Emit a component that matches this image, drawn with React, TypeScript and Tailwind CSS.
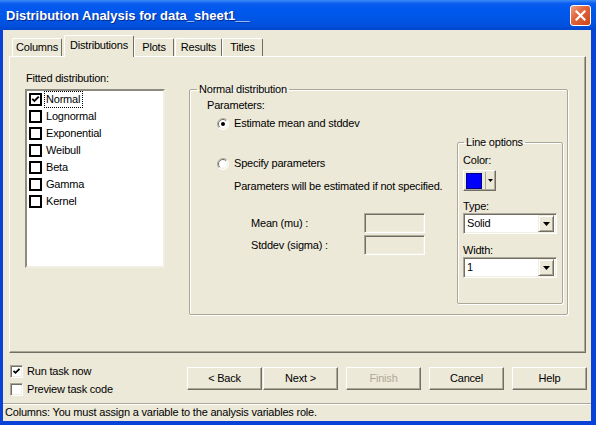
import React from "react";

const F = "font-['Tahoma','Liberation_Sans',Arial,sans-serif] text-[11px] leading-[13px] tracking-[-0.2px] text-black";

function ListCheck({ checked }: { checked?: boolean }) {
  return (
    <span className="w-[13px] h-[13px] border-2 border-black bg-white flex items-center justify-center shrink-0">
      {checked && (
        <svg width="9" height="9" viewBox="0 0 9 9">
          <path d="M1.2 3.8 L3.4 6 L7.8 1.6" stroke="black" strokeWidth="1.9" fill="none" />
        </svg>
      )}
    </span>
  );
}

function SunkenCheck({ checked }: { checked?: boolean }) {
  return (
    <span className="w-[13px] h-[13px] border border-t-[#aca899] border-l-[#aca899] border-b-white border-r-white bg-white shadow-[inset_1px_1px_0_#716f64,inset_-1px_-1px_0_#f1efe2] flex items-center justify-center shrink-0">
      {checked && (
        <svg width="9" height="9" viewBox="0 0 9 9">
          <path d="M1.5 3.8 L3.5 5.8 L7.5 1.8" stroke="black" strokeWidth="1.8" fill="none" />
        </svg>
      )}
    </span>
  );
}

function Radio({ checked }: { checked?: boolean }) {
  return (
    <svg width="12" height="12" viewBox="0 0 12 12" className="shrink-0">
      <circle cx="6" cy="6" r="5.5" fill="white" />
      <path d="M2.1 9.9 A5.5 5.5 0 0 1 9.9 2.1" stroke="#aca899" fill="none" />
      <path d="M9.9 2.1 A5.5 5.5 0 0 1 2.1 9.9" stroke="#ffffff" fill="none" />
      <path d="M2.8 9.2 A4.5 4.5 0 0 1 9.2 2.8" stroke="#716f64" fill="none" />
      <path d="M9.2 2.8 A4.5 4.5 0 0 1 2.8 9.2" stroke="#f1efe2" fill="none" />
      {checked && <circle cx="6" cy="6" r="2" fill="black" />}
    </svg>
  );
}

function Arrow() {
  return (
    <svg width="7" height="4" viewBox="0 0 7 4">
      <path d="M0 0 H7 L3.5 4 Z" fill="black" />
    </svg>
  );
}

function DropBtn() {
  return (
    <span className="w-[16px] h-[17px] bg-[#ece9d8] border border-t-[#f1efe2] border-l-[#f1efe2] border-b-[#716f64] border-r-[#716f64] shadow-[inset_1px_1px_0_white,inset_-1px_-1px_0_#aca899] flex items-center justify-center shrink-0">
      <Arrow />
    </span>
  );
}

function Select({ value }: { value: string }) {
  return (
    <div className="w-[94px] h-[21px] bg-white border border-t-[#aca899] border-l-[#aca899] border-b-white border-r-white shadow-[inset_1px_1px_0_#716f64,inset_-1px_-1px_0_#f1efe2] flex items-center pl-[3px] pr-[2px]">
      <span className="flex-1">{value}</span>
      <DropBtn />
    </div>
  );
}

function Button({ label, disabled, className = "" }: { label: string; disabled?: boolean; className?: string }) {
  return (
    <div
      className={`w-[75px] h-[23px] bg-[#ece9d8] border border-t-white border-l-white border-b-[#716f64] border-r-[#716f64] shadow-[inset_-1px_-1px_0_#aca899] flex items-center justify-center ${disabled ? "text-[#aca899]" : ""} ${className}`}
    >
      {label}
    </div>
  );
}

function Tab({ label, w, selected, className = "" }: { label: string; w: string; selected?: boolean; className?: string }) {
  return (
    <div
      className={`${w} ${selected ? "h-[22px] mb-[-1px] relative z-10 pb-[3px]" : "h-[18px]"} bg-[#ece9d8] border-t border-l border-r border-t-white border-l-white border-r-[#716f64] rounded-t-[2px] flex items-center justify-center shrink-0 ${className}`}
    >
      {label}
    </div>
  );
}

const items = ["Normal", "Lognormal", "Exponential", "Weibull", "Beta", "Gamma", "Kernel"];

const etched =
  "border border-[#aca899] shadow-[inset_1px_1px_0_white,1px_1px_0_white] rounded-[2px]";

export default function App() {
  return (
    <div className={`w-[596px] h-[425px] flex flex-col bg-[#0842d6] ${F}`}>
      {/* Title bar */}
      <div className="h-[30px] shrink-0 flex items-center pl-[6px] pr-[5px] bg-[linear-gradient(to_bottom,#3d8cf7_0%,#0a5cf0_12%,#0058ee_30%,#0055e5_65%,#004fda_88%,#0046cc_100%)]">
        <span className="flex-1 text-white font-bold text-[13px] leading-[15px] font-['Trebuchet_MS','Liberation_Sans',Arial,sans-serif] tracking-[0px] [text-shadow:1px_1px_0_#0a2a8a]">
          Distribution Analysis for data_sheet1__
        </span>
        <div className="w-[21px] h-[21px] rounded-[3px] border border-white bg-[linear-gradient(135deg,#f0a080_0%,#e2663c_40%,#cc4418_100%)] flex items-center justify-center">
          <svg width="11" height="11" viewBox="0 0 11 11">
            <path d="M1.5 1.5 L9.5 9.5 M9.5 1.5 L1.5 9.5" stroke="white" strokeWidth="2.2" strokeLinecap="square" />
          </svg>
        </div>
      </div>

      {/* Body */}
      <div className="flex-1 ml-[3px] mr-[5px] mb-[4px] bg-[#ece9d8] flex flex-col">
        {/* Tabs */}
        <div className="h-[26px] shrink-0 flex items-end pl-[9px]">
          <Tab label="Columns" w="w-[50px]" />
          <Tab label="Distributions" w="w-[70px]" selected className="ml-[2px]" />
          <Tab label="Plots" w="w-[40px]" />
          <Tab label="Results" w="w-[47px]" className="ml-[1px]" />
          <Tab label="Titles" w="w-[41px]" />
        </div>

        {/* Tab page */}
        <div className="ml-[6px] mr-[5px] h-[297px] shrink-0 border border-t-white border-l-white border-b-[#716f64] border-r-[#716f64] shadow-[inset_-1px_-1px_0_#aca899] flex items-start pt-[15px] pl-[15px]">
          {/* Left column */}
          <div className="w-[140px] shrink-0 flex flex-col">
            <div className="h-[13px] pl-[1px]">Fitted distribution:</div>
            <div className="mt-[4px] h-[179px] bg-white border-2 border-t-[#8d8b80] border-l-[#8d8b80] border-b-[#f1efe2] border-r-[#f1efe2] flex flex-col pl-[2px]">
              {items.map((it, i) => (
                <div key={it} className="h-[17px] flex items-center gap-[2px]">
                  <ListCheck checked={i === 0} />
                  <span
                    className={`h-[17px] flex items-center pl-[1px] pr-[2px] ${i === 0 ? "border border-dotted border-black" : "border border-transparent"}`}
                  >
                    {it}
                  </span>
                </div>
              ))}
            </div>
          </div>

          {/* Normal distribution group */}
          <fieldset className={`ml-[24px] mt-[11px] w-[379px] h-[232px] shrink-0 p-0 m-0 ${etched} flex`}>
            <legend className="ml-[7px] px-[2px] h-[13px]">Normal distribution</legend>
            <div className="flex w-full">
              <div className="flex flex-col pl-[17px] flex-1">
                <div className="mt-[3px] h-[13px]">Parameters:</div>
                <div className="mt-[5px] h-[13px] pl-[10px] flex items-center gap-[5px]">
                  <Radio checked />
                  <span>Estimate mean and stddev</span>
                </div>
                <div className="mt-[27px] h-[13px] pl-[10px] flex items-center gap-[5px]">
                  <Radio />
                  <span>Specify parameters</span>
                </div>
                <div className="mt-[10px] h-[13px] pl-[27px] whitespace-nowrap">
                  Parameters will be estimated if not specified.
                </div>
                <div className="mt-[20px] pl-[44px] flex items-center">
                  <span className="w-[113px] shrink-0">Mean (mu) :</span>
                  <div className="w-[61px] h-[20px] border border-t-[#aca899] border-l-[#aca899] border-b-white border-r-white shadow-[inset_1px_1px_0_#716f64,inset_-1px_-1px_0_#f1efe2] bg-[#ece9d8]" />
                </div>
                <div className="mt-[2px] pl-[44px] flex items-center">
                  <span className="w-[113px] shrink-0">Stddev (sigma) :</span>
                  <div className="w-[61px] h-[20px] border border-t-[#aca899] border-l-[#aca899] border-b-white border-r-white shadow-[inset_1px_1px_0_#716f64,inset_-1px_-1px_0_#f1efe2] bg-[#ece9d8]" />
                </div>
              </div>

              {/* Line options */}
              <fieldset className={`mt-[40px] mr-[4px] w-[106px] h-[168px] shrink-0 p-0 m-0 ${etched}`}>
                <legend className="ml-[6px] px-[2px] h-[13px]">Line options</legend>
                <div className="flex flex-col pl-[5px]">
                  <div className="mt-[5px] h-[13px]">Color:</div>
                  <div className="mt-[3px] w-[33px] h-[21px] border border-t-white border-l-white border-b-[#716f64] border-r-[#716f64] shadow-[inset_-1px_-1px_0_#aca899] flex items-center pl-[2px]">
                    <span className="w-[16px] h-[16px] bg-[#0000ff] border border-[#000080]" />
                    <span className="ml-[3px] w-[1px] h-[17px] bg-[#aca899]" />
                    <span className="ml-[2px] flex items-center">
                      <svg width="5" height="3" viewBox="0 0 5 3">
                        <path d="M0 0 H5 L2.5 3 Z" fill="black" />
                      </svg>
                    </span>
                  </div>
                  <div className="mt-[9px] h-[13px]">Type:</div>
                  <Select value="Solid" />
                  <div className="mt-[10px] h-[13px]">Width:</div>
                  <Select value="1" />
                </div>
              </fieldset>
            </div>
          </fieldset>
        </div>

        {/* Bottom area */}
        <div className="h-[50px] shrink-0 flex">
          <div className="w-[184px] shrink-0 pl-[7px] pt-[12px] flex flex-col gap-[5px]">
            <div className="h-[13px] flex items-center gap-[4px]">
              <SunkenCheck checked />
              <span>Run task now</span>
            </div>
            <div className="h-[13px] flex items-center gap-[4px]">
              <SunkenCheck />
              <span>Preview task code</span>
            </div>
          </div>
          <div className="pt-[14px] flex items-start">
            <Button label="< Back" />
            <Button label="Next >" className="ml-[1px]" />
            <Button label="Finish" disabled className="ml-[8px]" />
            <Button label="Cancel" className="ml-[8px]" />
            <Button label="Help" className="ml-[8px]" />
          </div>
        </div>

        {/* Status bar */}
        <div className="flex-1 border-t border-t-[#aca899] shadow-[inset_0_1px_0_white] pl-[2px] flex items-center">
          Columns: You must assign a variable to the analysis variables role.
        </div>
      </div>
    </div>
  );
}
